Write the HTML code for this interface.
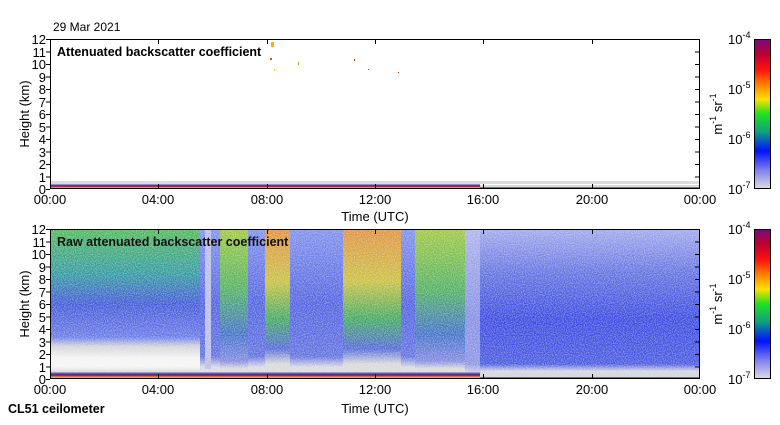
<!DOCTYPE html>
<html><head><style>
html,body{margin:0;padding:0;background:#fff;}
body{width:780px;height:420px;overflow:hidden;}
svg text{font-family:"Liberation Sans",sans-serif;}
</style></head><body>
<svg width="780" height="420" viewBox="0 0 780 420" xmlns="http://www.w3.org/2000/svg">
<defs>
<filter id="nz" x="0" y="0" width="100%" height="100%">
<feTurbulence type="fractalNoise" baseFrequency="0.9" numOctaves="1" seed="3"/>
<feColorMatrix type="matrix" values="0 0 0 0 1  0 0 0 0 1  0 0 0 0 1  0 0 0 -3 1.9"/>
</filter>
<linearGradient id="cb" x1="0" y1="0" x2="0" y2="1">
<stop offset="0" stop-color="#7a0a7a"/>
<stop offset="0.1" stop-color="#c00030"/>
<stop offset="0.2" stop-color="#ff1010"/>
<stop offset="0.3" stop-color="#ff8000"/>
<stop offset="0.4" stop-color="#ffe000"/>
<stop offset="0.5" stop-color="#20e020"/>
<stop offset="0.62" stop-color="#10a080"/>
<stop offset="0.75" stop-color="#0010ff"/>
<stop offset="0.88" stop-color="#8080f0"/>
<stop offset="1" stop-color="#d8d8e0"/>
</linearGradient>
<linearGradient id="left" x1="0" y1="0" x2="0" y2="1">
<stop offset="0" stop-color="#50b858"/>
<stop offset="0.3" stop-color="#3098a0"/>
<stop offset="0.5" stop-color="#4058d8"/>
<stop offset="0.72" stop-color="#6878e8"/>
<stop offset="0.78" stop-color="#d0d0d8"/>
<stop offset="0.86" stop-color="#f4f4f4"/>
<stop offset="0.92" stop-color="#f4f4f4"/>
<stop offset="0.95" stop-color="#d8d8d8"/>
</linearGradient>
<linearGradient id="blue" x1="0" y1="0" x2="0" y2="1">
<stop offset="0" stop-color="#8090ec"/>
<stop offset="0.5" stop-color="#5060e0"/>
<stop offset="0.85" stop-color="#6070e0"/>
<stop offset="0.92" stop-color="#d8d8e0"/>
</linearGradient>
<linearGradient id="green" x1="0" y1="0" x2="0" y2="1">
<stop offset="0" stop-color="#a0c840"/>
<stop offset="0.4" stop-color="#50b060"/>
<stop offset="0.7" stop-color="#4070c8"/>
<stop offset="0.88" stop-color="#8088e0"/>
<stop offset="0.93" stop-color="#d8d8d8"/>
</linearGradient>
<linearGradient id="orange" x1="0" y1="0" x2="0" y2="1">
<stop offset="0" stop-color="#e09040"/>
<stop offset="0.35" stop-color="#c8c040"/>
<stop offset="0.6" stop-color="#40a860"/>
<stop offset="0.8" stop-color="#5068d8"/>
<stop offset="0.9" stop-color="#d8d8d8"/>
</linearGradient>
<linearGradient id="right" x1="0" y1="0" x2="0" y2="1">
<stop offset="0" stop-color="#a0a8ec"/>
<stop offset="0.3" stop-color="#6070e0"/>
<stop offset="0.6" stop-color="#3848e0"/>
<stop offset="0.9" stop-color="#4858e0"/>
<stop offset="0.95" stop-color="#d8d8e0"/>
</linearGradient>
<linearGradient id="base" x1="0" y1="0" x2="0" y2="1">
<stop offset="0" stop-color="#c0c0c0"/>
<stop offset="0.3" stop-color="#3030d0"/>
<stop offset="0.5" stop-color="#c01040"/>
<stop offset="0.75" stop-color="#e0c020"/>
<stop offset="1" stop-color="#10a080"/>
</linearGradient>
</defs>

<text x="53" y="31" font-size="12">29 Mar 2021</text>

<rect x="50" y="39" width="650" height="150" fill="#fff"/>
<rect x="50" y="181" width="650" height="3" fill="#dcdcdc"/>
<rect x="50" y="184" width="430" height="5" fill="url(#base)"/>
<rect x="480" y="185" width="220" height="4" fill="#d8d8e0"/>
<rect x="480" y="187" width="220" height="2" fill="#30b030"/>
<rect x="271" y="42" width="3" height="5" fill="#ffb000"/>
<rect x="270" y="58" width="2" height="2" fill="#e05000"/>
<rect x="274" y="69" width="1" height="2" fill="#ffd000"/>
<rect x="298" y="62" width="1" height="3" fill="#80c000"/>
<rect x="354" y="59" width="1" height="2" fill="#e03000"/>
<rect x="368" y="69" width="1" height="1" fill="#e03000"/>
<rect x="398" y="72" width="1" height="1" fill="#e03000"/>
<text x="57" y="56" font-size="12.5" font-weight="bold">Attenuated backscatter coefficient</text>

<rect x="50" y="229" width="150" height="150" fill="url(#left)"/>
<rect x="200" y="229" width="20" height="150" fill="url(#blue)"/>
<rect x="205" y="229" width="6" height="140" fill="#b8bce8"/>
<rect x="220" y="229" width="28" height="150" fill="url(#green)"/>
<rect x="248" y="229" width="17" height="150" fill="url(#blue)"/>
<rect x="265" y="229" width="25" height="150" fill="url(#orange)"/>
<rect x="290" y="229" width="53" height="150" fill="url(#blue)"/>
<rect x="343" y="229" width="58" height="150" fill="url(#orange)"/>
<rect x="401" y="229" width="14" height="150" fill="url(#blue)"/>
<rect x="415" y="229" width="50" height="150" fill="url(#green)"/>
<rect x="465" y="229" width="235" height="150" fill="url(#right)"/>
<rect x="465" y="229" width="15" height="150" fill="#b8bce8" opacity="0.6"/>
<rect x="50" y="229" width="650" height="143" filter="url(#nz)" opacity="0.35"/>
<rect x="50" y="372" width="430" height="7" fill="url(#base)"/>
<rect x="480" y="374" width="220" height="5" fill="#d8d8e0"/>
<rect x="480" y="377" width="220" height="2" fill="#20a060"/>
<text x="57" y="246" font-size="12.5" font-weight="bold" fill="#111">Raw attenuated backscatter coefficient</text>

<g stroke="#000" stroke-width="1" fill="none">
<rect x="50.5" y="39.5" width="649" height="149"/>
<rect x="50.5" y="229.5" width="649" height="149"/>
<rect x="754.5" y="39.5" width="16" height="149"/>
<rect x="754.5" y="229.5" width="16" height="149"/>
</g>
<rect x="755" y="40" width="15" height="148" fill="url(#cb)"/>
<rect x="755" y="230" width="15" height="148" fill="url(#cb)"/>

<g stroke="#000" stroke-width="1">
<path d="M158.5 39v5M267.5 39v5M375.5 39v5M483.5 39v5M592.5 39v5M158.5 189v-5M267.5 189v-5M375.5 189v-5M483.5 189v-5M592.5 189v-5"/>
<path d="M158.5 229v5M267.5 229v5M375.5 229v5M483.5 229v5M592.5 229v5M158.5 379v-5M267.5 379v-5M375.5 379v-5M483.5 379v-5M592.5 379v-5"/>
<path d="M46 39.5h4M46 52h4M46 64.5h4M46 77h4M46 89.5h4M46 102h4M46 114.5h4M46 127h4M46 139.5h4M46 152h4M46 164.5h4M46 177h4M46 189.5h4"/>
<path d="M700 52h-5M700 64.5h-5M700 77h-5M700 89.5h-5M700 102h-5M700 114.5h-5M700 127h-5M700 139.5h-5M700 152h-5M700 164.5h-5M700 177h-5"/>
<path d="M46 229.5h4M46 242h4M46 254.5h4M46 267h4M46 279.5h4M46 292h4M46 304.5h4M46 317h4M46 329.5h4M46 342h4M46 354.5h4M46 367h4M46 379.5h4"/>
<path d="M700 242h-5M700 254.5h-5M700 267h-5M700 279.5h-5M700 292h-5M700 304.5h-5M700 317h-5M700 329.5h-5M700 342h-5M700 354.5h-5M700 367h-5"/>
</g>

<g font-size="13" text-anchor="end">
<text x="46" y="44">12</text><text x="46" y="57">11</text><text x="46" y="69">10</text><text x="46" y="82">9</text><text x="46" y="94">8</text><text x="46" y="107">7</text><text x="46" y="119">6</text><text x="46" y="132">5</text><text x="46" y="144">4</text><text x="46" y="157">3</text><text x="46" y="169">2</text><text x="46" y="182">1</text><text x="46" y="194">0</text>
<text x="46" y="234">12</text><text x="46" y="247">11</text><text x="46" y="259">10</text><text x="46" y="272">9</text><text x="46" y="284">8</text><text x="46" y="297">7</text><text x="46" y="309">6</text><text x="46" y="322">5</text><text x="46" y="334">4</text><text x="46" y="347">3</text><text x="46" y="359">2</text><text x="46" y="372">1</text><text x="46" y="384">0</text>
</g>
<g font-size="13" text-anchor="middle">
<text x="50" y="204">00:00</text><text x="158" y="204">04:00</text><text x="267" y="204">08:00</text><text x="375" y="204">12:00</text><text x="483" y="204">16:00</text><text x="592" y="204">20:00</text><text x="700" y="204">00:00</text>
<text x="375" y="221">Time (UTC)</text>
<text x="50" y="394">00:00</text><text x="158" y="394">04:00</text><text x="267" y="394">08:00</text><text x="375" y="394">12:00</text><text x="483" y="394">16:00</text><text x="592" y="394">20:00</text><text x="700" y="394">00:00</text>
<text x="375" y="413">Time (UTC)</text>
</g>
<text font-size="13" text-anchor="middle" transform="translate(29,114) rotate(-90)">Height (km)</text>
<text font-size="13" text-anchor="middle" transform="translate(29,304) rotate(-90)">Height (km)</text>
<text x="8" y="413" font-size="12.5" font-weight="bold">CL51 ceilometer</text>

<g font-size="13">
<text x="728" y="44">10<tspan font-size="9" dy="-6">-4</tspan></text>
<text x="728" y="94">10<tspan font-size="9" dy="-6">-5</tspan></text>
<text x="728" y="144">10<tspan font-size="9" dy="-6">-6</tspan></text>
<text x="728" y="194">10<tspan font-size="9" dy="-6">-7</tspan></text>
<text x="728" y="234">10<tspan font-size="9" dy="-6">-4</tspan></text>
<text x="728" y="284">10<tspan font-size="9" dy="-6">-5</tspan></text>
<text x="728" y="334">10<tspan font-size="9" dy="-6">-6</tspan></text>
<text x="728" y="384">10<tspan font-size="9" dy="-6">-7</tspan></text>
</g>
<text font-size="13" text-anchor="middle" transform="translate(722,114) rotate(-90)">m<tspan font-size="9" dy="-6">-1</tspan><tspan dy="6"> sr</tspan><tspan font-size="9" dy="-6">-1</tspan></text>
<text font-size="13" text-anchor="middle" transform="translate(722,304) rotate(-90)">m<tspan font-size="9" dy="-6">-1</tspan><tspan dy="6"> sr</tspan><tspan font-size="9" dy="-6">-1</tspan></text>
</svg>
</body></html>
